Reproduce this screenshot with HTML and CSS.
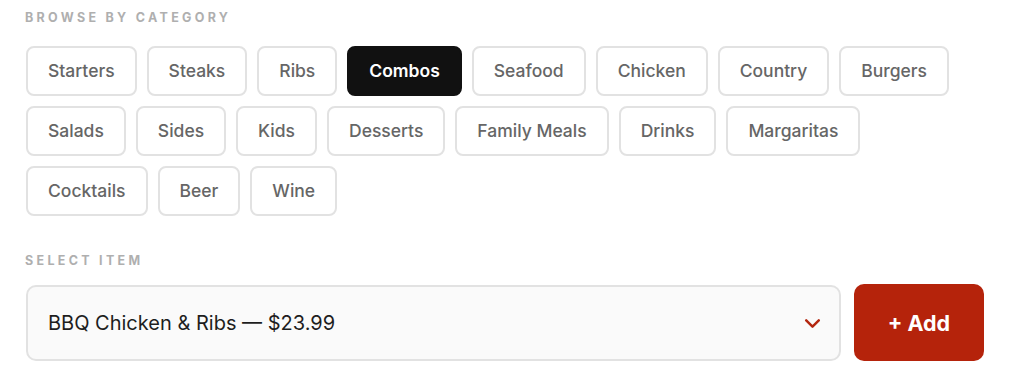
FILE: index.html
```html
<!DOCTYPE html>
<html>
<head>
<meta charset="utf-8">
<link rel="stylesheet" href="styles.css">
</head>
<body>
<div class="panel">
  <div class="label">Browse by category</div>
  <div class="chips">
    <button class="chip">Starters</button>
    <button class="chip">Steaks</button>
    <button class="chip">Ribs</button>
    <button class="chip active">Combos</button>
    <button class="chip">Seafood</button>
    <button class="chip">Chicken</button>
    <button class="chip">Country</button>
    <button class="chip">Burgers</button>
    <button class="chip">Salads</button>
    <button class="chip">Sides</button>
    <button class="chip">Kids</button>
    <button class="chip">Desserts</button>
    <button class="chip">Family Meals</button>
    <button class="chip">Drinks</button>
    <button class="chip">Margaritas</button>
    <button class="chip">Cocktails</button>
    <button class="chip">Beer</button>
    <button class="chip">Wine</button>
  </div>
  <div class="label label-select">Select item</div>
  <div class="select-row">
    <div class="select">
      <span class="select-text">BBQ Chicken &amp; Ribs — $23.99</span>
      <svg class="chev" width="17" height="11" viewBox="0 0 17 11"><path d="M2.2 2.4l6.3 6.2 6.3-6.2" fill="none" stroke="#b3260f" stroke-width="2.5" stroke-linecap="round" stroke-linejoin="round"/></svg>
    </div>
    <button class="add">+ Add</button>
  </div>
</div>
</body>
</html>
```
FILE: styles.css
```css
html, body {
  margin: 0;
  padding: 0;
  background: #ffffff;
}
body {
  font-family: Inter, "Noto Sans", sans-serif;
}
.panel {
  padding: 9px 28px 0 25px;
}
.label {
  font-size: 12.5px;
  line-height: 18px;
  font-weight: 700;
  letter-spacing: 3.3px;
  text-transform: uppercase;
  color: #afafaf;
}
.chips {
  display: flex;
  flex-wrap: wrap;
  gap: 10px 10px;
  margin-top: 19px;
  padding-left: 1px;
}
.chip {
  height: 50px;
  padding: 0 20px 2px;
  border: 2px solid #e2e2e2;
  border-radius: 8px;
  background: #fff;
  font-family: inherit;
  font-size: 17.5px;
  font-weight: 500;
  color: #666666;
}
.chip.active {
  background: #111111;
  border-color: #111111;
  color: #ffffff;
  font-weight: 600;
}
.label-select {
  margin-top: 36px;
}
.select-row {
  display: flex;
  gap: 13px;
  margin-top: 15px;
  padding-left: 1px;
}
.select {
  flex: 1;
  height: 76px;
  box-sizing: border-box;
  border: 2px solid #e2e2e2;
  border-radius: 10px;
  background: #fafafa;
  display: flex;
  align-items: center;
  justify-content: space-between;
  padding: 0 18px 0 20px;
}
.select-text {
  font-size: 20px;
  color: #1e1e1e;
}
.add {
  width: 130px;
  height: 77px;
  margin-top: -1px;
  border: none;
  border-radius: 10px;
  background: #b5230b;
  color: #fff;
  font-family: inherit;
  font-size: 21.5px;
  font-weight: 700;
}
```
